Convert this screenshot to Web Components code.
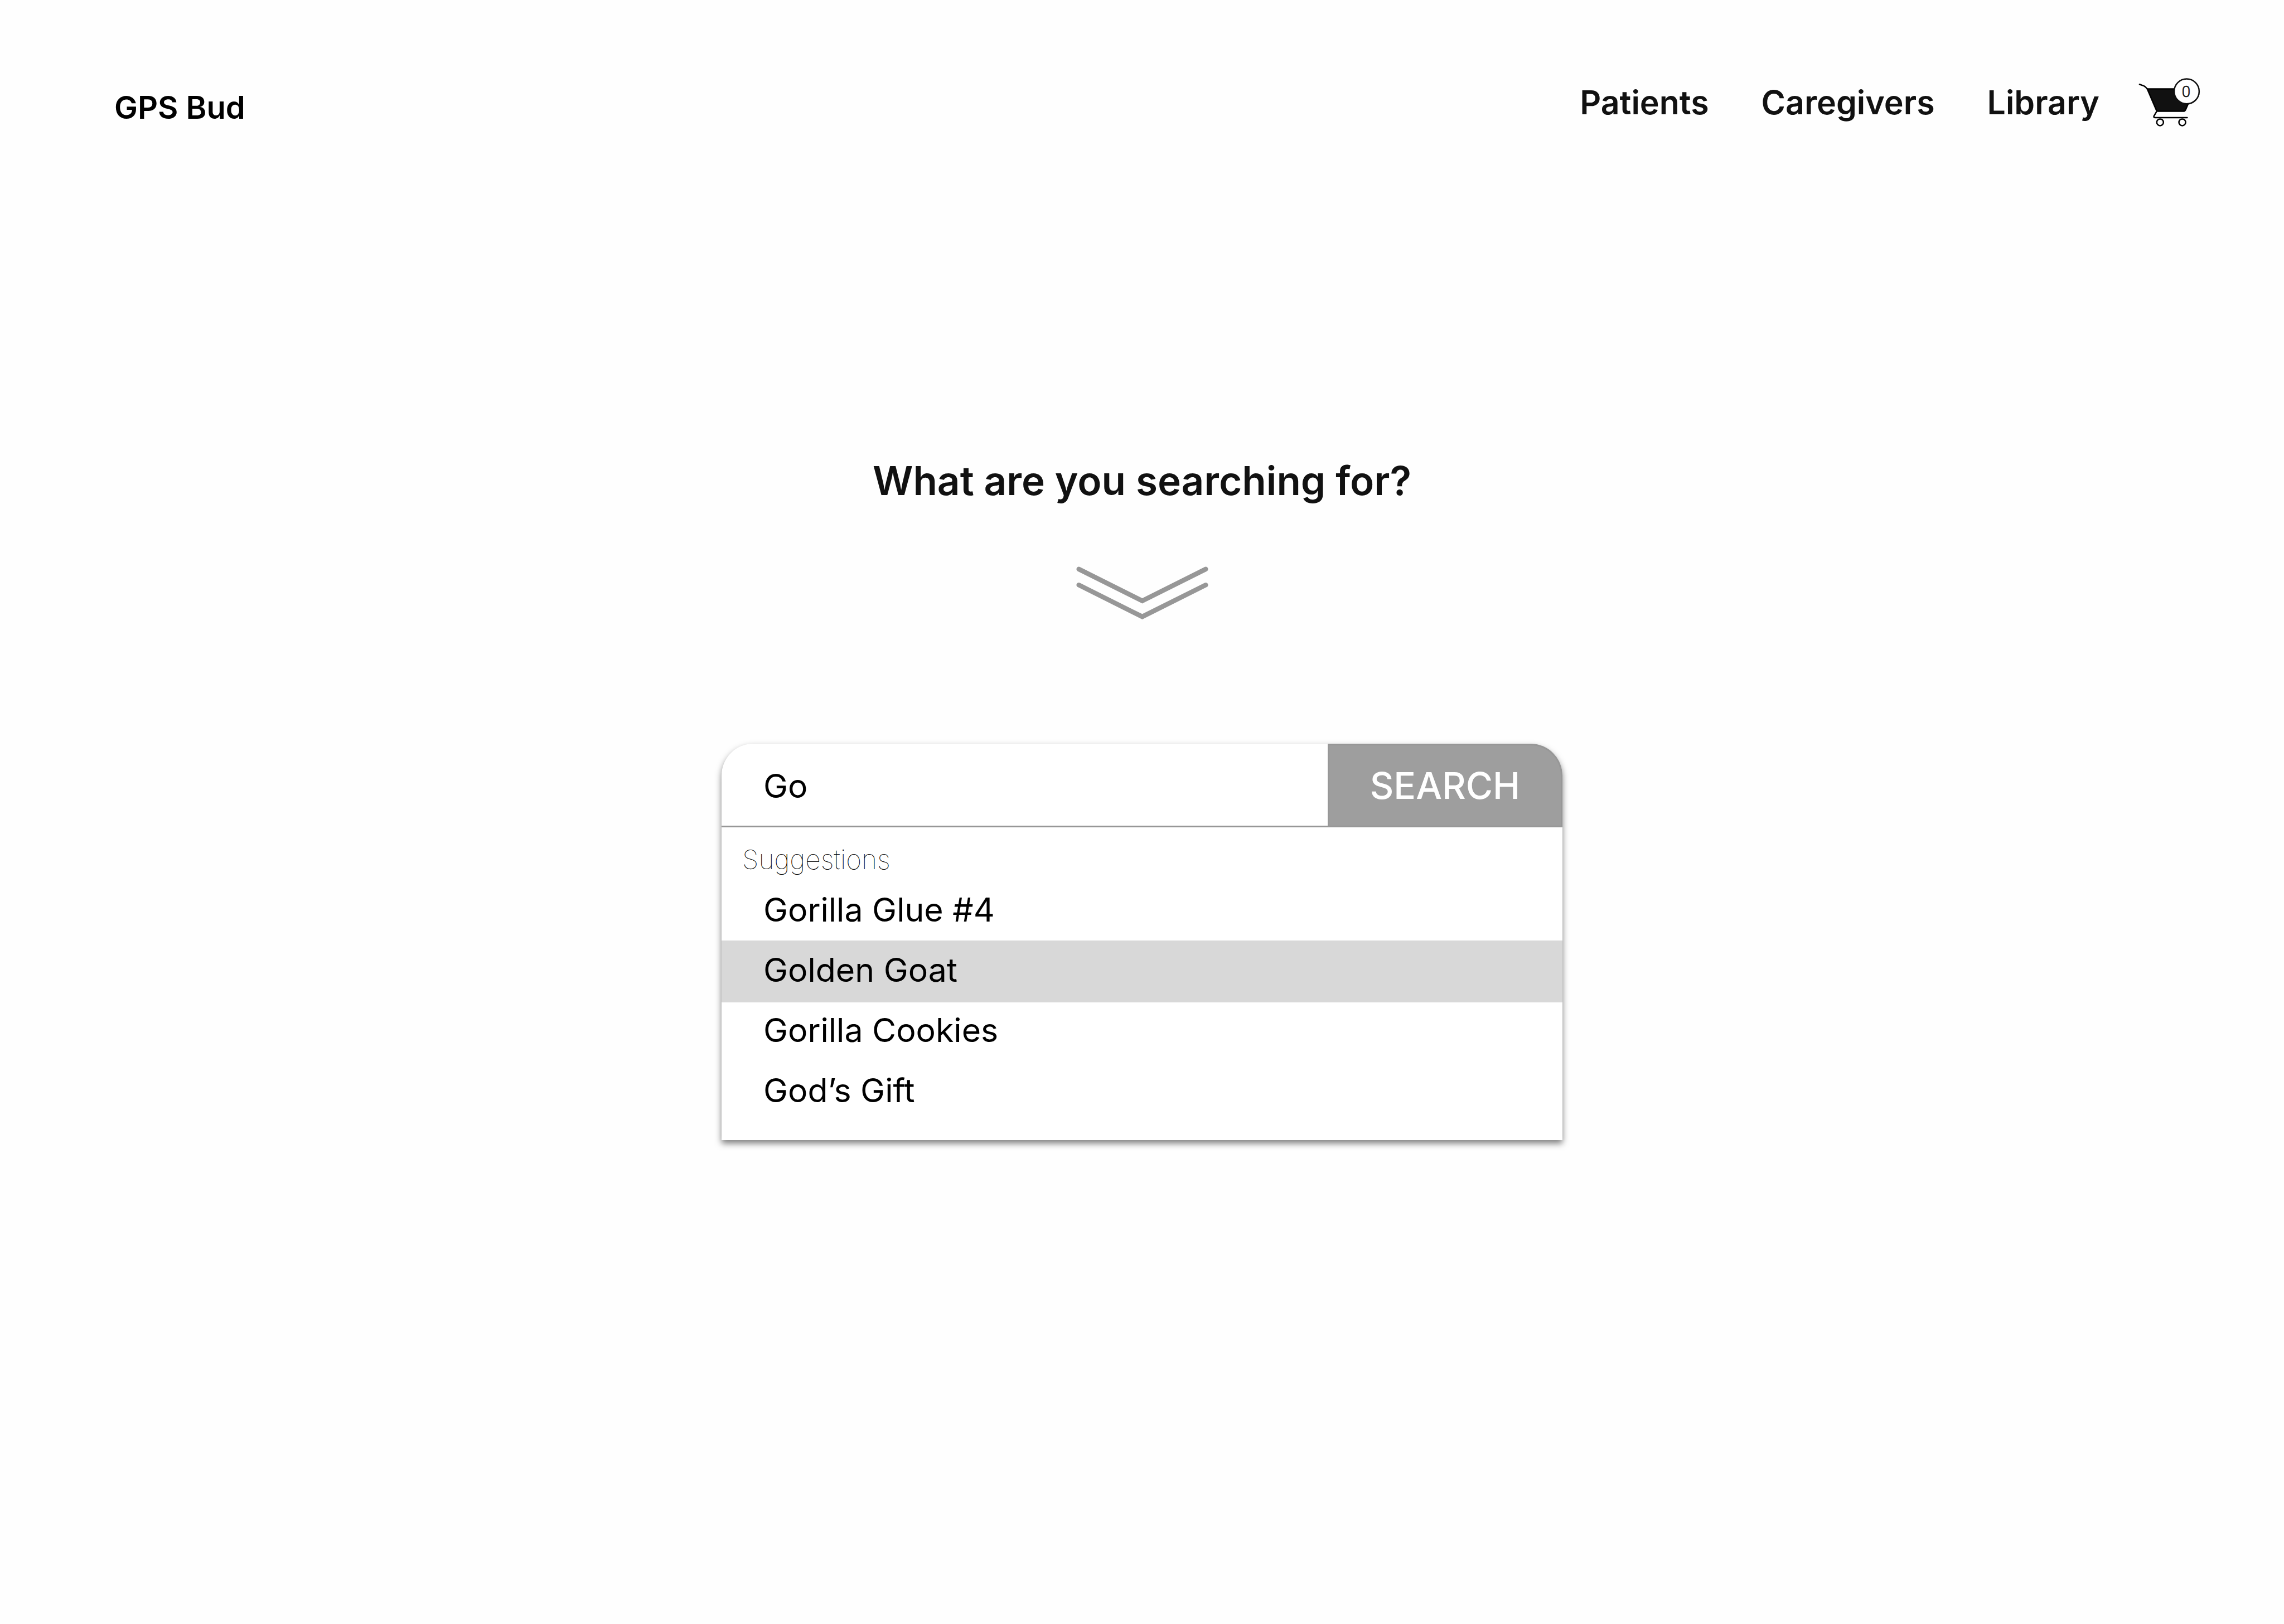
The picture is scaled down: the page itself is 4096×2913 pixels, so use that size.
<!DOCTYPE html>
<html lang="en">
<head>
<meta charset="utf-8">
<title>GPS Bud</title>
<style>
  body { margin: 0; background: #fefefe; color: #111; font-family: Inter, "Liberation Sans", sans-serif; }
</style>
</head>
<body>
<gps-page></gps-page>

<script>
const define = (name, html) => customElements.define(name, class extends HTMLElement {
  connectedCallback() {
    if (!this.shadowRoot) this.attachShadow({ mode: 'open' }).innerHTML = html;
  }
});

define('cart-button', `
  <style>
    :host { display: block; }
    a { display: block; color: inherit; }
    svg { display: block; width: 112px; height: 90px; }
    text { font: 300 88px Roboto, sans-serif; fill: #111; stroke: #111; stroke-width: 2; }
  </style>
  <a href="#cart" aria-label="Cart">
    <svg viewBox="75 45 355 285" fill="none" stroke="#000" stroke-width="8" stroke-linecap="round" stroke-linejoin="round">
      <path d="M81 87 L106 96 Q116 101 125 113"/>
      <path d="M125 113 H394 L343 231 Q339 240 330 240 H186 Q180 240 177 234 Z" fill="#111"/>
      <path d="M179 240 L163 267 Q160 276 168 276 H352"/>
      <circle cx="198" cy="303" r="19"/>
      <circle cx="324" cy="303" r="19"/>
      <circle cx="349" cy="127" r="71" fill="#fff" stroke="#111"/>
      <text x="346" y="158" text-anchor="middle">0</text>
    </svg>
  </a>`);

define('site-header', `
  <style>
    :host { display: block; }
    header { display: flex; align-items: center; justify-content: space-between; padding: 138px 149px 0 205px; }
    a { color: inherit; text-decoration: none; font-weight: 600; line-height: 60px; }
    .brand { color: #000; font-size: 56px; padding-top: 20px; }
    nav, .links { display: flex; align-items: center; }
    nav { gap: 70px; }
    .links { gap: 94px; padding-top: 2px; font-size: 59px; }
  </style>
  <header>
    <a class="brand" href="#home">GPS Bud</a>
    <nav>
      <div class="links">
        <a href="#patients">Patients</a>
        <a href="#caregivers">Caregivers</a>
        <a href="#library">Library</a>
      </div>
      <cart-button></cart-button>
    </nav>
  </header>`);

define('down-chevrons', `
  <style>
    :host { display: block; }
    svg { display: block; width: 237px; height: 97px; }
  </style>
  <svg viewBox="0 0 250 102" fill="none" stroke="#979797" stroke-width="9" stroke-linecap="round" aria-hidden="true">
    <path d="M5 6 L125 66 L245 6"/>
    <path d="M5 36 L125 96 L245 36"/>
  </svg>`);

define('suggestion-item', `
  <style>
    :host { display: block; padding: 0 75px 6px; font-size: 59px; line-height: 105px; color: #000; }
    :host([selected]) { background: #d8d8d8; }
  </style>
  <slot></slot>`);

define('search-box', `
  <style>
    :host { display: block; background: #fff; border-radius: 57px 57px 0 0; box-shadow: 0 6px 12px rgba(0, 0, 0, .5); }
    form { display: flex; height: 147px; border-bottom: 3px solid #979797; }
    input { flex: 1; min-width: 0; box-sizing: border-box; border: 0; outline: 0; background: none; padding: 4px 75px 0; font: 400 59px Inter, sans-serif; color: #000; }
    button { width: 421px; box-sizing: border-box; padding: 0; border: 3px solid #979797; border-bottom: 0; border-radius: 0 57px 0 0; background: #9e9e9e; color: #fff; font: 500 66px Inter, sans-serif; }
    .panel { padding: 28px 0 31px; }
    .title { margin: 0 0 7px; padding: 0 37px; font-size: 48px; font-weight: 100; line-height: 60px; color: #000; }
  </style>
  <form>
    <input type="text" value="Go" aria-label="Search">
    <button type="button">SEARCH</button>
  </form>
  <div class="panel">
    <p class="title">Suggestions</p>
    <div role="listbox" aria-label="Suggestions"><slot></slot></div>
  </div>`);

define('gps-page', `
  <style>
    :host { display: block; min-height: 100vh; }
    main { display: flex; flex-direction: column; align-items: center; padding-top: 594px; }
    h1 { margin: 0 0 113px; font-size: 71px; font-weight: 600; line-height: 80px; }
    search-box { width: min(1508px, 90%); margin-top: 222px; }
    suggestion-item:not(:first-child) { margin-top: -3px; }
  </style>
  <site-header></site-header>
  <main>
    <h1>What are you searching for?</h1>
    <down-chevrons></down-chevrons>
    <search-box>
      <suggestion-item role="option">Gorilla Glue #4</suggestion-item>
      <suggestion-item role="option" selected aria-selected="true">Golden Goat</suggestion-item>
      <suggestion-item role="option">Gorilla Cookies</suggestion-item>
      <suggestion-item role="option">God’s Gift</suggestion-item>
    </search-box>
  </main>`);
</script>
</body>
</html>
